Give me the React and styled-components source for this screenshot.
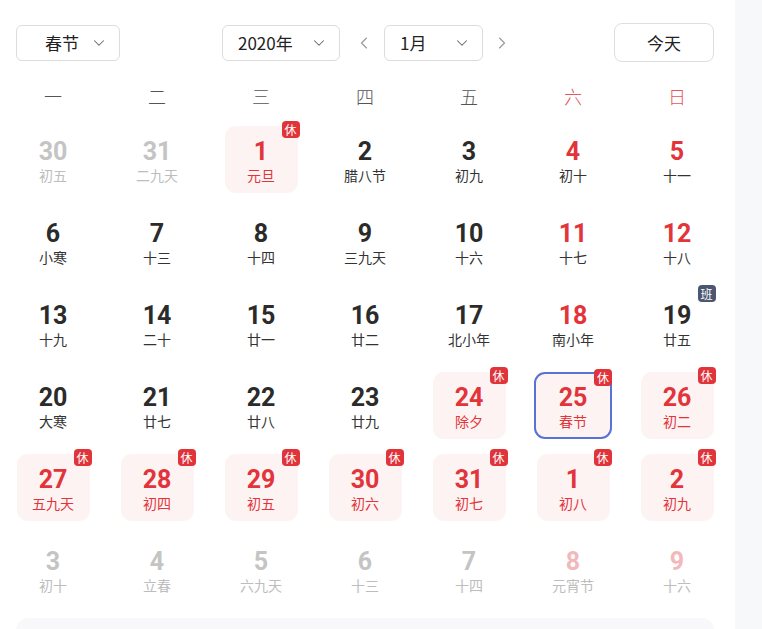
import React from 'react'
import styled, { createGlobalStyle } from 'styled-components'
import { ChevronDown, ChevronLeft, ChevronRight } from 'lucide-react'

const GlobalStyle = createGlobalStyle`
body {
    margin: 0;
    background: #f7f8fa;
    font-family: "Noto Sans CJK SC", "Noto Sans", sans-serif;
}
`

const weekdays = ['一', '二', '三', '四', '五', '六', '日']

// type: other | normal | weekend | holiday | nextWeekend ; badge: 休 / 班
const days = [
    { n: 30, l: '初五', t: 'other' },
    { n: 31, l: '二九天', t: 'other' },
    { n: 1, l: '元旦', t: 'holiday', b: '休' },
    { n: 2, l: '腊八节' },
    { n: 3, l: '初九' },
    { n: 4, l: '初十', t: 'weekend' },
    { n: 5, l: '十一', t: 'weekend' },
    { n: 6, l: '小寒' },
    { n: 7, l: '十三' },
    { n: 8, l: '十四' },
    { n: 9, l: '三九天' },
    { n: 10, l: '十六' },
    { n: 11, l: '十七', t: 'weekend' },
    { n: 12, l: '十八', t: 'weekend' },
    { n: 13, l: '十九' },
    { n: 14, l: '二十' },
    { n: 15, l: '廿一' },
    { n: 16, l: '廿二' },
    { n: 17, l: '北小年' },
    { n: 18, l: '南小年', t: 'weekend' },
    { n: 19, l: '廿五', b: '班' },
    { n: 20, l: '大寒' },
    { n: 21, l: '廿七' },
    { n: 22, l: '廿八' },
    { n: 23, l: '廿九' },
    { n: 24, l: '除夕', t: 'holiday', b: '休' },
    { n: 25, l: '春节', t: 'holiday', b: '休', selected: true },
    { n: 26, l: '初二', t: 'holiday', b: '休' },
    { n: 27, l: '五九天', t: 'holiday', b: '休' },
    { n: 28, l: '初四', t: 'holiday', b: '休' },
    { n: 29, l: '初五', t: 'holiday', b: '休' },
    { n: 30, l: '初六', t: 'holiday', b: '休' },
    { n: 31, l: '初七', t: 'holiday', b: '休' },
    { n: 1, l: '初八', t: 'holiday', b: '休' },
    { n: 2, l: '初九', t: 'holiday', b: '休' },
    { n: 3, l: '初十', t: 'other' },
    { n: 4, l: '立春', t: 'other' },
    { n: 5, l: '六九天', t: 'other' },
    { n: 6, l: '十三', t: 'other' },
    { n: 7, l: '十四', t: 'other' },
    { n: 8, l: '元宵节', t: 'nextWeekend' },
    { n: 9, l: '十六', t: 'nextWeekend' },
]

const numColor = {
    other: '#c4c4c4',
    normal: '#2b2b2b',
    weekend: '#e2343a',
    holiday: '#e2343a',
    nextWeekend: '#f2b9bb',
}

const lunarColor = {
    other: '#bdbdbd',
    normal: '#333333',
    weekend: '#333333',
    holiday: '#e2343a',
    nextWeekend: '#bdbdbd',
}

const App = () => {
    return <>
        <GlobalStyle />
        <Page>
            <Toolbar>
                <Select width={104} textPad={28}>
                    <span>春节</span>
                    <ChevronDown size={18} strokeWidth={1.4} color="#666" />
                </Select>
                <Middle>
                    <Select width={118} textPad={15}>
                        <span>2020年</span>
                        <ChevronDown size={18} strokeWidth={1.4} color="#666" />
                    </Select>
                    <Arrow width={44} shift={3}><ChevronLeft size={20} strokeWidth={1.4} /></Arrow>
                    <Select width={99} textPad={15}>
                        <span>1月</span>
                        <ChevronDown size={18} strokeWidth={1.4} color="#666" />
                    </Select>
                    <Arrow width={38} shift={0}><ChevronRight size={20} strokeWidth={1.4} /></Arrow>
                </Middle>
                <TodayButton>今天</TodayButton>
            </Toolbar>

            <WeekRow>
                {weekdays.map((w, i) => <WeekDay key={w} weekend={i > 4}>{w}</WeekDay>)}
            </WeekRow>

            <Grid>
                {days.map((d, i) => {
                    const t = d.t || 'normal'
                    return <Cell key={i} $bg={t === 'holiday'} $selected={d.selected}>
                        <Num color={numColor[t]}>{d.n}</Num>
                        <Lunar color={lunarColor[t]}>{d.l}</Lunar>
                        {d.b && <Badge $work={d.b === '班'}>{d.b}</Badge>}
                    </Cell>
                })}
            </Grid>

            <InfoPanel />
        </Page>
    </>
}

const Page = styled.div`
width: 735px;
min-height: 629px;
box-sizing: border-box;
background: #fff;
padding: 23px 16px 0;
overflow: hidden;
`

const Toolbar = styled.div`
display: flex;
align-items: center;
justify-content: space-between;
width: 698px;
height: 39px;
`

const Middle = styled.div`
display: flex;
align-items: center;
margin-left: 9px;
`

const Select = styled.div`
width: ${p => p.width}px;
height: 36px;
box-sizing: border-box;
border: 1px solid #dcdcdc;
border-radius: 6px;
display: flex;
align-items: center;
justify-content: space-between;
padding: 0 11px 0 ${p => p.textPad}px;
font-size: 17px;
color: #222;
span { line-height: 1; }
`

const Arrow = styled.div`
width: ${p => p.width}px;
display: flex;
justify-content: center;
padding-left: ${p => p.shift}px;
box-sizing: border-box;
color: #9a9a9a;
`

const TodayButton = styled.div`
width: 100px;
height: 39px;
box-sizing: border-box;
border: 1px solid #dedede;
border-radius: 8px;
display: flex;
align-items: center;
justify-content: center;
font-size: 17px;
color: #222;
`

const WeekRow = styled.div`
display: grid;
grid-template-columns: repeat(7, 104px);
margin: 12px 0 0 -15px;
height: 44px;
align-items: center;
`

const WeekDay = styled.div`
text-align: center;
font-size: 18px;
font-weight: 300;
color: ${p => p.weekend ? '#e4575c' : '#555'};
`

const Grid = styled.div`
display: grid;
grid-template-columns: repeat(7, 104px);
grid-auto-rows: 67px;
row-gap: 15px;
margin: 8px 0 0 -15px;
`

const Cell = styled.div`
position: relative;
justify-self: center;
width: ${p => p.$selected ? 78 : 73}px;
height: 67px;
box-sizing: border-box;
border-radius: 11px;
background: ${p => p.$bg ? '#fdf3f2' : 'transparent'};
border: ${p => p.$selected ? '2px solid #5872d6' : 'none'};
display: flex;
flex-direction: column;
align-items: center;
justify-content: center;
padding-top: 4px;
`

const Num = styled.div`
font-family: Roboto, "Noto Sans", sans-serif;
font-weight: 700;
font-size: 25px;
line-height: 27px;
color: ${p => p.color};
`

const Lunar = styled.div`
font-size: 14px;
line-height: 20px;
color: ${p => p.color};
`

const Badge = styled.div`
position: absolute;
top: -5px;
right: -2px;
width: 18px;
height: 17px;
border-radius: 4px;
background: ${p => p.$work ? '#4b5670' : '#e0333a'};
color: #fff;
font-size: 12px;
line-height: 17px;
text-align: center;
`

const InfoPanel = styled.div`
margin-top: 15px;
width: 698px;
height: 60px;
border-radius: 12px;
background: #f8f8fa;
`

export default App
